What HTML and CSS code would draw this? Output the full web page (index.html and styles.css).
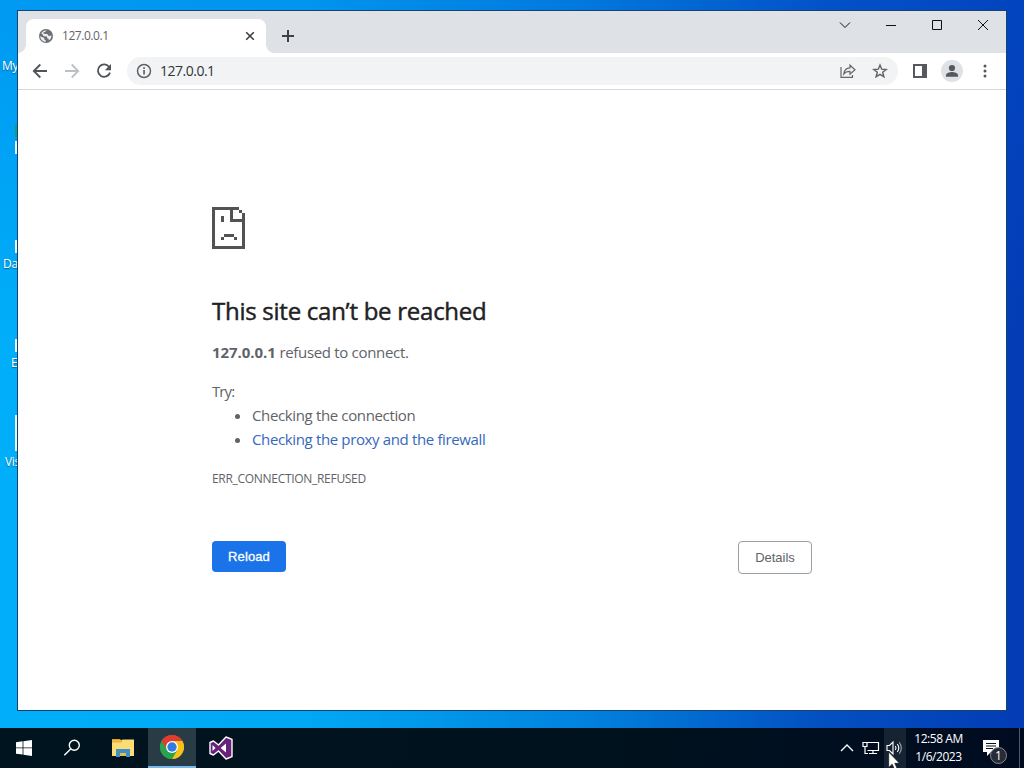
FILE: index.html
```html
<!DOCTYPE html>
<html lang="en">
<head>
  <meta charset="UTF-8" />
  <meta name="viewport" content="width=device-width, initial-scale=1.0"/>
  <title>127.0.0.1</title>
  <link rel="stylesheet" href="styles.css">
</head>
<body>
  <!-- Desktop shortcuts, mostly behind the window -->
  <div class="desktop-icons">
    <span class="shortcut my">My</span>
    <i class="sliver green"></i>
    <i class="sliver one"></i>
    <i class="sliver two"></i>
    <span class="shortcut data">Data</span>
    <i class="sliver three"></i>
    <span class="shortcut edge">E</span>
    <i class="sliver four"></i>
    <span class="shortcut visual">Visu</span>
  </div>

  <div class="window">
    <div class="tab-strip">
      <div class="tab">
        <svg class="globe" width="16" height="16" viewBox="0 0 16 16"><circle cx="8" cy="8" r="7" fill="#6b6f73"/><path d="M2.2 8.2 6.2 10v1.2l1.6 1.2v1.3C4.800 13.800 2.300 11.300 2.200 8.200zM8.800 2.300 7.300 3.800 5.600 4.300 5.500 5.800 9.200 6.100 10.800 8 13.500 7.500C13.400 9.500 12.600 11.400 11 12.500L10.600 10.800 9.200 10.300 9 8.600 5.600 8.200 4.500 6.300 3.200 5.300 5.500 2.900z" fill="#fff" opacity=".88"/></svg>
        <span class="tab-title">127.0.0.1</span>
        <svg width="10" height="10" viewBox="0 0 10 10" fill="none" stroke="#3c4043" stroke-width="1.6"><path d="M1.200 1.200l7.600 7.600M8.800 1.200L1.200 8.800"/></svg>
      </div>
      <button class="new-tab"><svg width="14" height="14" viewBox="0 0 14 14" stroke="#3c4043" stroke-width="2"><path d="M7 1v12M1 7h12"/></svg></button>
      <div class="window-controls">
        <svg width="46" height="28" viewBox="0 0 46 28"><path d="M18 11.500l5 5 5-5"/></svg>
        <svg width="46" height="28" viewBox="0 0 46 28"><path d="M18 14.500h10"/></svg>
        <svg width="46" height="28" viewBox="0 0 46 28"><path d="M18.500 9.500h9v9h-9z"/></svg>
        <svg width="46" height="28" viewBox="0 0 46 28"><path d="M18 9l10 10M28 9L18 19"/></svg>
      </div>
    </div>

    <div class="toolbar">
      <svg class="back" width="16" height="16" viewBox="0 0 16 16" fill="none" stroke="#505357" stroke-width="1.800"><path d="M15 8H2M8.300 1.500L1.800 8l6.500 6.500"/></svg>
      <svg class="forward" width="16" height="16" viewBox="0 0 16 16" fill="none" stroke="#bdc0c3" stroke-width="1.800"><path d="M1 8h13M7.700 1.500L14.200 8l-6.500 6.500"/></svg>
      <svg class="refresh" width="16" height="16" viewBox="0 0 16 16"><path d="M13.300 4.200A6.200 6.200 0 1 0 14 9.600" fill="none" stroke="#505357" stroke-width="1.800"/><path d="M15 1v6.200H8.800z" fill="#505357"/></svg>
      <div class="address-bar">
        <svg width="16" height="16" viewBox="0 0 16 16"><circle cx="8" cy="8" r="6.500" fill="none" stroke="#5f6368" stroke-width="1.500"/><path d="M7.200 7h1.700v4.600H7.200zM7.200 4.200h1.700v1.700H7.200z" fill="#5f6368"/></svg>
        <span class="url">127.0.0.1</span>
        <svg class="share" width="16" height="16" viewBox="0 0 16 16" fill="none" stroke="#64686c" stroke-width="1.200"><path d="M1 4v10.400h11.500V12M3.800 10.800C4.300 7.100 6.500 5.200 10 4.900V2.200l5 4.500-5 4.400V8.400c-3 0-4.900.7-6.200 2.400z"/></svg>
        <svg class="star" width="16" height="16" viewBox="0 0 16 16" fill="none" stroke="#5f6368" stroke-width="1.400"><path d="M8 2l1.700 4.200 4.500.3-3.500 2.800 1.200 4.400L8 11.300l-3.900 2.400 1.200-4.400-3.500-2.800 4.500-.3z"/></svg>
      </div>
      <svg class="side-panel" width="16" height="16" viewBox="0 0 16 16"><path d="M1 1h14v14H1zM3 3v10h7V3z" fill="#55585d" fill-rule="evenodd"/></svg>
      <span class="avatar"><svg width="14" height="14" viewBox="0 0 14 14" fill="#55585d"><circle cx="7" cy="4" r="3.100"/><path d="M1 12.800v-1.500C1 9 4.800 8 7 8s6 1 6 3.300v1.500z"/></svg></span>
      <svg class="more" width="4" height="16" viewBox="0 0 4 16" fill="#55585d"><circle cx="2" cy="3" r="1.500"/><circle cx="2" cy="8" r="1.500"/><circle cx="2" cy="13" r="1.500"/></svg>
    </div>

    <main>
      <div class="error-page">
        <svg class="sad-page" width="33" height="42" viewBox="0 0 33 42" fill="#535353" shape-rendering="crispEdges"><path d="M0 0h27v3h-6v9h9v3H18V3H3v36h27V15h3v27H0zM27 3h3v3h-3zM30 6h3v9h-3zM9 9h3v6H9zM12 27h10v3H12zM9 30h3v3H9zM22 30h3v3h-3z"/></svg>
        <h1>This site can’t be reached</h1>
        <p class="summary"><strong>127.0.0.1</strong> <span>refused to connect.</span></p>
        <p class="try">Try:</p>
        <ul>
          <li class="check">Checking the connection</li>
          <li><a href="#">Checking the proxy and the firewall</a></li>
        </ul>
        <div class="error-code">ERR_CONNECTION_REFUSED</div>
        <div class="buttons">
          <button class="reload">Reload</button>
          <button class="details">Details</button>
        </div>
      </div>
    </main>
  </div>

  <footer class="taskbar">
    <div class="task"><svg width="16" height="16" viewBox="0 0 16 16" fill="#fff"><path d="M0 2.200L6.600 1.300v6.200H0zM7.400 1.200L16 0v7.500H7.400zM0 8.300h6.600v6.300L0 13.700zM7.400 8.300H16V16l-8.600-1.200z"/></svg></div>
    <div class="task"><svg width="18" height="18" viewBox="0 0 18 18" fill="none" stroke="#fff" stroke-width="1.400"><circle cx="11.300" cy="6.300" r="5"/><path d="M7.700 9.900L1.300 16.300"/></svg></div>
    <div class="task explorer"><svg width="22" height="18" viewBox="0 0 22 18"><path d="M0 0h8l2 2H0z" fill="#dda321"/><path d="M0 1.500h9.500l1-1H22V17H0z" fill="#fbdc75"/><path d="M0 1.800h10v1.700H0z" fill="#e9b73c"/><path d="M4 10h14v8h-4v-4H8v4H4z" fill="#3e91c5"/><path d="M8 14h6v3H8z" fill="#e9bd49"/></svg></div>
    <div class="task active"><svg width="24" height="24" viewBox="0 0 24 24"><circle cx="12" cy="12" r="12" fill="#34a853"/><path d="M12 12L1.600 6A12 12 0 0 1 22.400 6z" fill="#e33b2e"/><path d="M12 6h10.400A12 12 0 0 1 12 24l5.200-9z" fill="#fbc116"/><path d="M1.600 6L6.800 15 12 12 12 6z" fill="#e33b2e"/><path d="M1.600 6L6.800 15 12 18 17.200 15 12 24A12 12 0 0 1 1.600 6z" fill="#2ba24c"/><circle cx="12" cy="12" r="6" fill="#fff"/><circle cx="12" cy="12" r="4.700" fill="#2f7de1"/></svg></div>
    <div class="task vs"><svg width="24" height="24" viewBox="0 0 24 24"><path d="M1 6.500L4.500 5l5 4L17 1l6 2.300v17.400L17 23l-7.500-8-5 4L1 17.500z" fill="#68217a" stroke="#fff" stroke-width="1.400" stroke-linejoin="round"/><path d="M3.500 9v6l3-3zM17 7.500v9L11.600 12z" fill="#fff"/></svg></div>

    <div class="tray">
      <svg class="chevron" width="14" height="8" viewBox="0 0 14 8" fill="none" stroke="#fff" stroke-width="1.400"><path d="M1 7l6-6 6 6"/></svg>
      <svg class="network" width="18" height="16" viewBox="0 0 18 16" fill="none" stroke="#fff" stroke-width="1.200"><path d="M5.500 2.500h11v8h-11M1 2.500h4v4H1zM3 6.500v7h3M11 10.500v3M7 13.500h8"/></svg>
      <div class="volume"><svg width="16" height="16" viewBox="0 0 16 16" fill="none" stroke="#fff" stroke-width="1.100"><path d="M1 5.500h2.500L7 2v12l-3.500-3.500H1z"/><path d="M9.300 6q1.500 2 0 4M11.300 4q3 4 0 8"/><path d="M13.300 2.300q4 5.700 0 11.400" opacity=".6"/></svg></div>
      <div class="clock"><span>12:58 AM</span><span>1/6/2023</span></div>
      <div class="notifications">
        <svg width="16" height="16" viewBox="0 0 16 16"><path d="M0 0h16v12H8l-4 4v-4H0z" fill="#fff"/><path d="M3 3.500h10M3 6h10M3 8.500h7" stroke="#061323"/></svg>
        <span class="badge">1</span>
      </div>
    </div>
  </footer>

  <svg class="cursor" width="13" height="20" viewBox="0 0 13 20"><path d="M.7 1v15.500l3.500-3.300 2.500 5.800 2.600-1.200-2.500-5.500h4.700z" fill="#fff" stroke="#111" stroke-width=".7"/></svg>
</body>
</html>
```

FILE: styles.css
```css
:root {
  --text-color: #5f6368;
  --primary-color: #1a73e8;
  --strip-color: #dee1e6;
}

* {
  box-sizing: border-box;
  margin: 0;
  padding: 0;
}

body {
  width: 1024px;
  height: 768px;
  overflow: hidden;
  position: relative;
  display: flex;
  flex-direction: column;
  font-family: "Open Sans", "Noto Sans", sans-serif;
  color: var(--text-color);
  background: linear-gradient(180deg, rgba(0,90,220,0.25), rgba(0,90,220,0) 45%),
    linear-gradient(90deg, #00aef9 0, #00a8f5 30%, #0184df 56%, #0350c1 80%, #033cb5 100%);
}

svg {
  display: block;
  flex: none;
}

button {
  border: none;
  background: none;
}

/* Desktop */
.shortcut {
  position: absolute;
  color: white;
  font-size: 12px;
  line-height: 16px;
  letter-spacing: -0.3px;
  text-shadow: 0 1px 1px rgba(0,0,0,0.4);
}

.my { left: 2px; top: 58px; }
.data { left: 3px; top: 256px; }
.edge { left: 11px; top: 355px; }
.visual { left: 5px; top: 454px; }

.sliver {
  position: absolute;
  left: 15px;
  width: 2px;
  height: 13px;
  background: #e7f5fc;
}

.green { top: 124px; background: #189a80; }
.one { top: 141px; }
.two { top: 240px; }
.three { top: 339px; }
.four { top: 415px; height: 36px; }

/* Browser window */
.window {
  width: 990px;
  height: 701px;
  margin: 10px 0 0 17px;
  display: flex;
  flex-direction: column;
  position: relative;
  flex: none;
  background: white;
  border: 1px solid #164370;
}

.tab-strip {
  height: 42px;
  flex: none;
  display: flex;
  align-items: flex-end;
  padding-left: 8px;
  background: var(--strip-color);
}

.tab {
  width: 240px;
  height: 34px;
  display: flex;
  align-items: center;
  padding: 0 11px 0 12px;
  position: relative;
  background: white;
  border-radius: 8px 8px 0 0;
}

.tab::before, .tab::after {
  content: "";
  position: absolute;
  bottom: 0;
  width: 8px;
  height: 8px;
}

.tab::before {
  left: -8px;
  background: radial-gradient(circle at 0 0, transparent 7.5px, white 8px);
}

.tab::after {
  right: -8px;
  background: radial-gradient(circle at 100% 0, transparent 7.5px, white 8px);
}

.tab-title {
  flex: 1;
  margin-left: 8px;
  padding-bottom: 1px;
  font-size: 12px;
  letter-spacing: -0.45px;
}

.new-tab {
  margin: 0 0 10px 15px;
}

.window-controls {
  display: flex;
  align-self: flex-start;
  margin-left: auto;
  fill: none;
  stroke: #111;
}

.toolbar {
  height: 37px;
  flex: none;
  display: flex;
  align-items: center;
  padding-left: 14px;
  border-bottom: 1px solid #d7d9dc;
}

.forward, .refresh {
  margin-left: 16px;
}

.address-bar {
  width: 771px;
  height: 28px;
  margin-left: 15px;
  display: flex;
  align-items: center;
  padding: 0 10px 0 9px;
  background: #f1f3f4;
  border-radius: 14px;
}

.url {
  margin-left: 8px;
  padding-bottom: 2px;
  color: #303438;
  font-size: 14px;
  letter-spacing: -0.5px;
}

.share {
  margin-left: auto;
}

.star {
  margin-left: 16px;
}

.side-panel {
  margin-left: 14px;
}

.avatar {
  width: 22px;
  height: 22px;
  margin-left: 13px;
  display: flex;
  align-items: center;
  justify-content: center;
  border-radius: 50%;
  background: #dee1e6;
}

.more {
  margin-left: 20px;
}

/* Error page */
main {
  flex: 1;
  padding: 117px 194px 0;
}

.error-page {
  width: 600px;
  font-size: 15px;
  line-height: 24px;
}

h1 {
  margin-top: 47px;
  color: #202124;
  font-size: 24px;
  font-weight: 500;
  line-height: 30px;
  letter-spacing: -0.26px;
  white-space: nowrap;
  -webkit-text-stroke: 0.45px #202124;
}

.summary {
  margin-top: 14px;
  letter-spacing: -0.32px;
}

.summary strong {
  letter-spacing: -0.05px;
}

.try {
  margin-top: 15px;
  letter-spacing: -0.9px;
}

ul {
  padding-left: 40px;
}

li {
  letter-spacing: -0.36px;
}

a {
  color: #3568bd;
  text-decoration: none;
}

.error-code {
  margin-top: 16px;
  font-size: 12px;
  letter-spacing: -0.3px;
}

.buttons {
  display: flex;
  justify-content: space-between;
  align-items: flex-start;
  margin-top: 50px;
}

.buttons button {
  width: 74px;
  height: 31px;
  font-family: "Liberation Sans", Arial, sans-serif;
  font-size: 13px;
  border-radius: 4px;
}

.buttons .reload {
  color: white;
  background: var(--primary-color);
  letter-spacing: 0.1px;
  -webkit-text-stroke: 0.3px white;
}

.buttons .details {
  height: 33px;
  color: var(--text-color);
  border: 1px solid #9aa0a6;
}

/* Taskbar */
.taskbar {
  height: 40px;
  flex: none;
  margin-top: 17px;
  display: flex;
  background: linear-gradient(90deg, #00141f, #00121e 60%, #000b20);
}

.task {
  width: 48px;
  display: flex;
  align-items: center;
  justify-content: center;
}

.explorer {
  width: 52px;
  padding-left: 1px;
}

.active {
  background: #293b45;
  border-bottom: 2px solid #76b9ed;
}

.vs {
  width: 50px;
}

.tray {
  margin-left: auto;
  display: flex;
  align-items: center;
  color: white;
}

.network {
  margin-left: 8px;
}

.volume {
  width: 22px;
  height: 40px;
  margin-left: 4px;
  display: flex;
  align-items: center;
  justify-content: center;
  padding-right: 2px;
  background: #152333;
}

.clock {
  width: 66px;
  display: flex;
  flex-direction: column;
  align-items: center;
  padding-right: 1px;
  font-size: 12px;
  line-height: 18px;
  letter-spacing: -0.45px;
}

.notifications {
  width: 48px;
  height: 40px;
  padding: 12px 0 0 11px;
  margin-right: 4px;
  position: relative;
  border-right: 1px solid #505967;
}

.badge {
  position: absolute;
  left: 18px;
  top: 19px;
  width: 17px;
  height: 17px;
  border: 1px solid #858991;
  border-radius: 50%;
  background: #272c36;
  font-size: 12px;
  line-height: 15px;
  text-align: center;
}

.cursor {
  position: absolute;
  left: 888px;
  top: 751px;
}
```
